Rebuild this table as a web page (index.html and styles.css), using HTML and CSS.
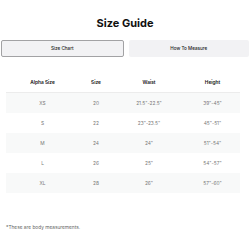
FILE: index.html
```html
<!DOCTYPE html>
<html>
<head>
<meta charset="utf-8">
<link rel="stylesheet" href="styles.css">
</head>
<body>
<div class="page">
  <h1 class="title">Size Guide</h1>
  <div class="tabs">
    <div class="tab active">Size Chart</div>
    <div class="tab">How To Measure</div>
  </div>
  <table class="chart">
    <colgroup>
      <col class="c1"><col class="c2"><col class="c3"><col class="c4">
    </colgroup>
    <thead>
      <tr><th>Alpha Size</th><th>Size</th><th>Waist</th><th>Height</th></tr>
    </thead>
    <tbody>
      <tr class="alt"><td>XS</td><td>20</td><td>21.5"-22.5"</td><td>39"-45"</td></tr>
      <tr><td>S</td><td>22</td><td>23"-23.5"</td><td>45"-51"</td></tr>
      <tr class="alt"><td>M</td><td>24</td><td>24"</td><td>51"-54"</td></tr>
      <tr><td>L</td><td>26</td><td>25"</td><td>54"-57"</td></tr>
      <tr class="alt"><td>XL</td><td>28</td><td>26"</td><td>57"-60"</td></tr>
    </tbody>
  </table>
  <p class="note">*These are body measurements.</p>
</div>
</body>
</html>
```

FILE: styles.css
```css
html, body {
  margin: 0;
  padding: 0;
  background: #ffffff;
}
.page {
  font-family: Inter, "Liberation Sans", sans-serif;
  color: #111;
  padding: 0 1px;
}
.title {
  margin: 15px 0 0;
  font-size: 11px;
  line-height: 16px;
  font-weight: 700;
  text-align: center;
  letter-spacing: 0;
}
.tabs {
  display: flex;
  gap: 5px;
  margin-top: 9px;
}
.tab {
  flex: 1;
  height: 17px;
  box-sizing: border-box;
  display: flex;
  align-items: center;
  justify-content: center;
  background: #f2f2f4;
  border-radius: 2px;
  font-size: 4.6px;
  font-weight: 500;
  color: #222;
}
.tab.active {
  border: 1px solid #a2a2a4;
}
.chart {
  margin: 15px 0 0 5px;
  width: 234px;
  border-collapse: collapse;
  table-layout: fixed;
  font-size: 4.8px;
}
.c1 { width: 73px; }
.c2 { width: 34px; }
.c3 { width: 72px; }
.c4 { width: 55px; }
.chart th {
  height: 20px;
  padding: 0;
  font-weight: 600;
  color: #111;
  border-bottom: 1px solid #ececec;
}
.chart td {
  height: 20px;
  padding: 0;
  text-align: center;
  color: #777;
}
.chart tr.alt td {
  background: #f8f9f9;
}
.note {
  margin: 30px 0 0 5px;
  font-size: 4.8px;
  line-height: 8px;
  color: #666;
}
```
